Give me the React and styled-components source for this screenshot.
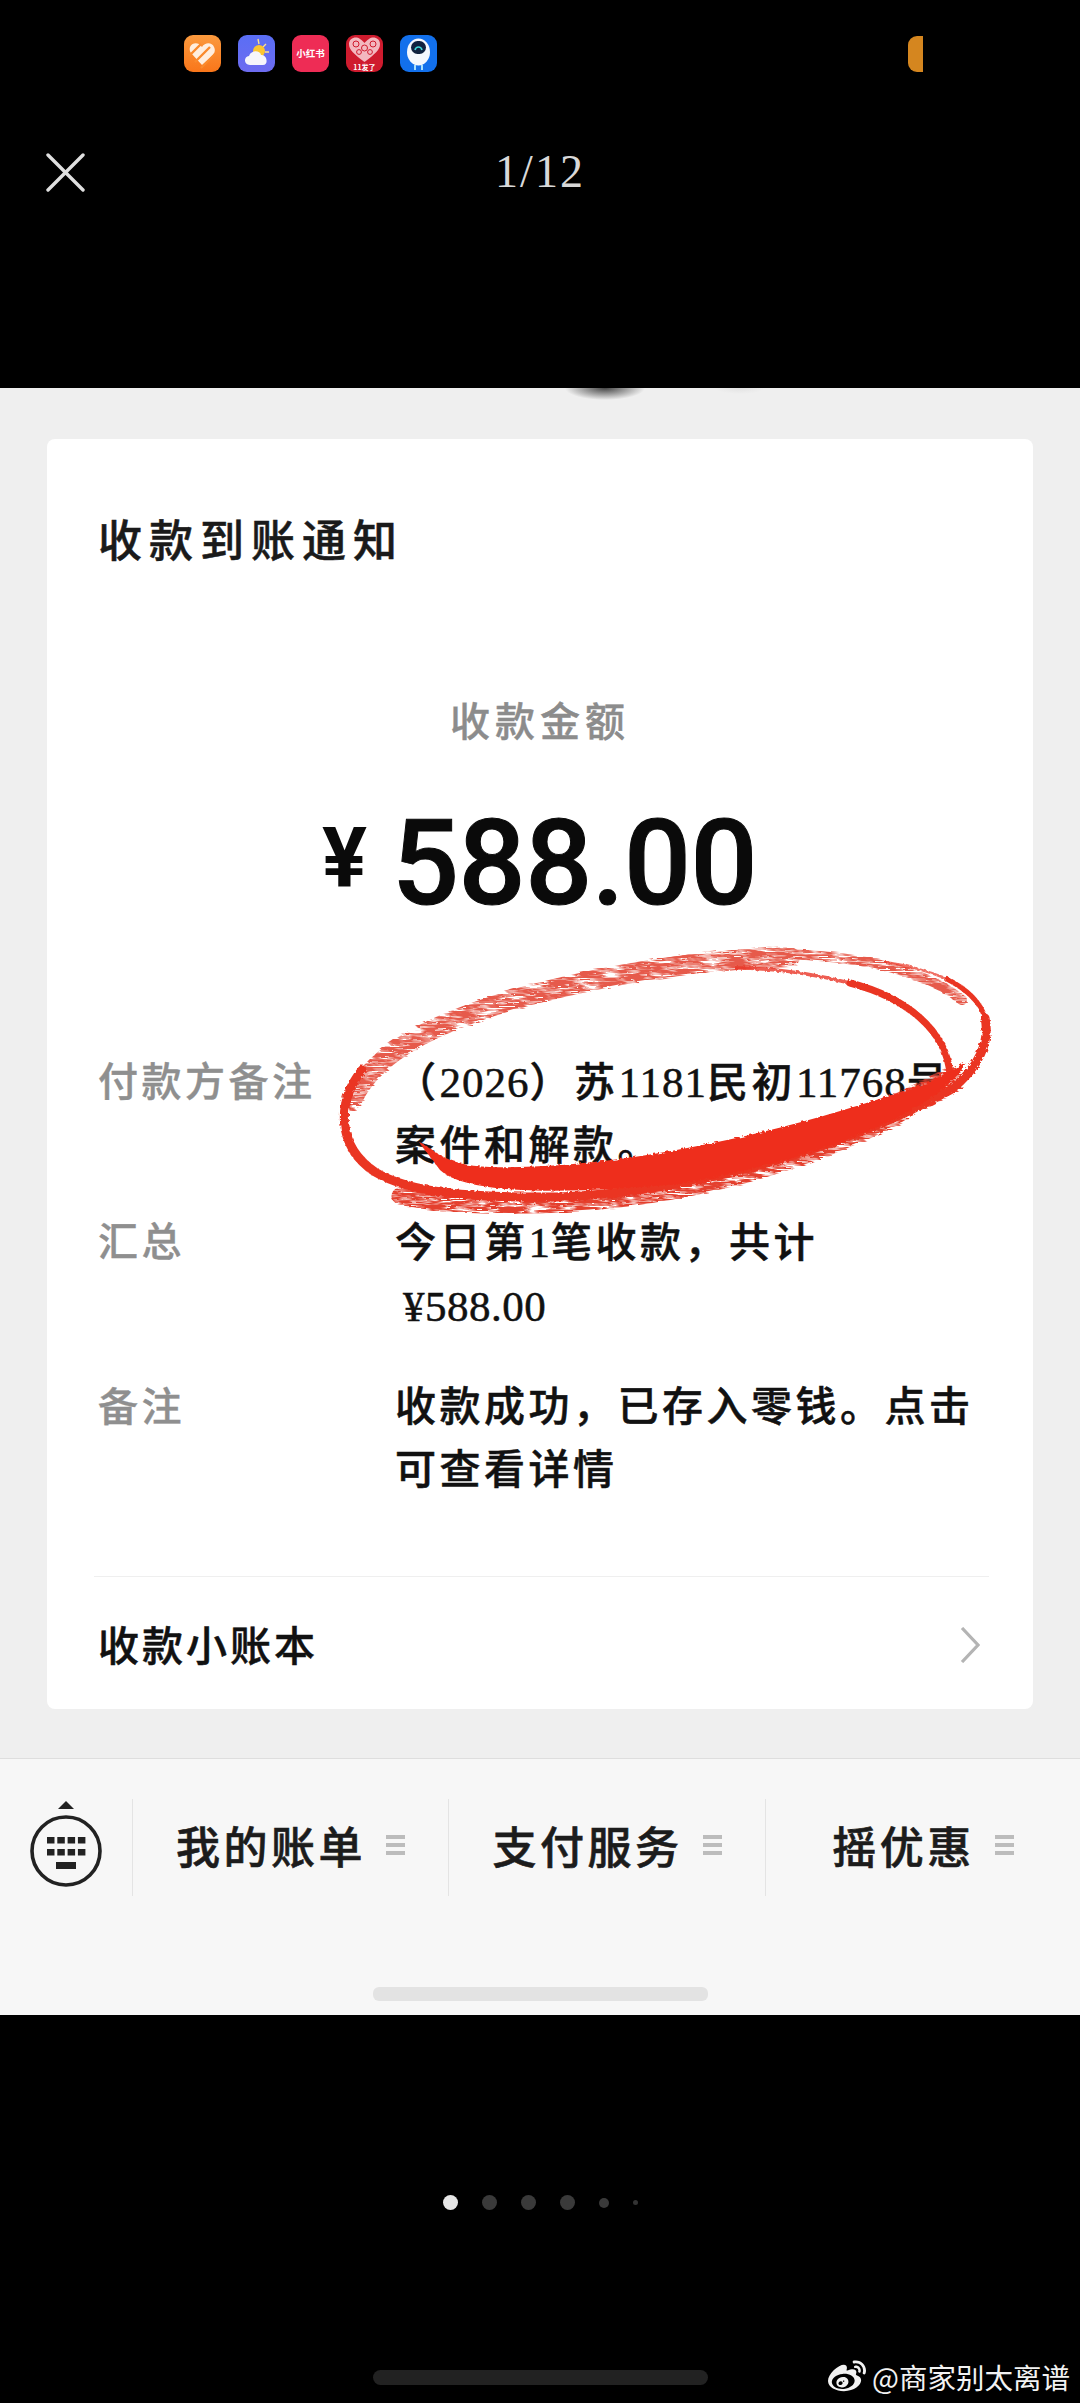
import styled, { createGlobalStyle } from "styled-components";
import { FaWeibo } from "react-icons/fa";

const cjk = `"Liberation Serif", "Noto Sans CJK SC", serif`;

const GlobalStyle = createGlobalStyle`
  html, body {
    margin: 0;
    padding: 0;
    background: #000;
  }
  * {
    box-sizing: border-box;
  }
`;

const Page = styled.div`
  position: relative;
  display: flex;
  flex-direction: column;
  width: 1080px;
  height: 2403px;
  overflow: hidden;
  background: #000;
  font-family: ${cjk};
`;

const Header = styled.header`
  height: 388px;
  padding-top: 35px;
`;

const StatusRow = styled.div`
  display: flex;
  align-items: center;
  gap: 17px;
  padding: 0 157px 0 184px;
`;

const AppIcon = styled.div`
  display: flex;
  flex-direction: column;
  align-items: center;
  justify-content: center;
  width: 37px;
  height: 37px;
  overflow: hidden;
  border-radius: 9px;
  background: ${({ $bg }) => $bg};
  color: #fff;
  font-family: "Noto Sans CJK SC", sans-serif;
  font-weight: 700;

  svg {
    display: block;
  }
`;

const IconText = styled.span`
  font-size: ${({ $size }) => $size}px;
  line-height: 1;
  white-space: nowrap;
`;

const ClippedIcon = styled.div`
  width: 15px;
  height: 36px;
  margin-left: auto;
  border-radius: 9px 0 0 9px;
  background: #d5861f;
`;

const TitleBar = styled.div`
  display: grid;
  grid-template-columns: 1fr auto 1fr;
  align-items: center;
  height: 60px;
  margin-top: 70px;
  padding: 0 46px;
  color: #d8d8d8;
`;

const Counter = styled.div`
  font-family: "Liberation Serif", serif;
  font-size: 46px;
  letter-spacing: 2px;
  line-height: 60px;
`;

const Sheet = styled.main`
  position: relative;
  display: flex;
  flex-direction: column;
  height: 1627px;
  padding-top: 51px;
  background: #efefef;
`;

const Smudge = styled.div`
  position: absolute;
  top: 0;
  left: ${({ $left }) => $left}px;
  width: ${({ $width }) => $width}px;
  height: ${({ $height }) => $height}px;
  background: radial-gradient(ellipse 50% 100% at 50% 0, ${({ $tone }) => $tone} 0, rgba(239, 239, 239, 0) 100%);
`;

const Card = styled.section`
  display: flex;
  flex-direction: column;
  width: 986px;
  height: 1270px;
  margin-left: 47px;
  padding: 74px 41px 0 51px;
  border-radius: 8px;
  background: #fff;
`;

const CardTitle = styled.h1`
  margin: 0;
  color: #1a1a1a;
  font-size: 44px;
  font-weight: 500;
  letter-spacing: 7px;
  line-height: 60px;
  -webkit-text-stroke: 0.5px #1a1a1a;
`;

const AmountLabel = styled.div`
  margin: 120px 10px 0 0;
  color: #8c8c8c;
  font-size: 40px;
  font-weight: 500;
  letter-spacing: 5px;
  line-height: 60px;
  text-align: center;
  -webkit-text-stroke: 0.4px #8c8c8c;
`;

const Amount = styled.div`
  display: flex;
  align-items: center;
  height: 124px;
  margin: 49px 0 0 224px;
  color: #0a0a0a;
  font-family: Roboto, sans-serif;
  font-weight: 500;
`;

const Yen = styled.span`
  width: 70px;
  margin-top: -12px;
  font-size: 84px;
  font-weight: 700;
`;

const Digits = styled.span`
  font-size: 118px;
  letter-spacing: -0.5px;
  -webkit-text-stroke: 1px #0a0a0a;
`;

const Rows = styled.div`
  margin-top: 125px;
`;

const Row = styled.div`
  display: grid;
  grid-template-columns: 297px 1fr;
  margin-top: ${({ $top }) => $top || 0}px;
  font-size: 41px;
  letter-spacing: 3.5px;
  line-height: 63px;
`;

const RowLabel = styled.div`
  color: #8f8f8f;
  font-size: 40px;
  font-weight: 500;
  -webkit-text-stroke: 0.4px #8f8f8f;
`;

const RowValue = styled.div`
  color: #111;
  font-weight: 500;
  -webkit-text-stroke: 0.5px #111;
`;

const Num = styled.span`
  font-size: 43px;
  font-weight: 400;
  letter-spacing: 1px;
`;

const TotalLine = styled(Num)`
  display: block;
  margin-left: 8px;
  letter-spacing: 0.5px;
`;

const Divider = styled.hr`
  width: 895px;
  height: 1px;
  margin: 74px 0 0 -4px;
  border: 0;
  background: #efefef;
`;

const LedgerRow = styled.div`
  display: flex;
  align-items: center;
  justify-content: space-between;
  height: 132px;
  padding-right: 12px;
  color: #111;
  font-size: 41px;
  font-weight: 500;
  letter-spacing: 3px;
  -webkit-text-stroke: 0.5px #111;

  svg {
    margin-top: 3px;
  }
`;

const Nav = styled.nav`
  display: flex;
  flex-direction: column;
  flex: 1;
  margin-top: 49px;
  padding-top: 40px;
  border-top: 1px solid #dedede;
  background: #f7f7f7;
`;

const NavRow = styled.div`
  display: grid;
  grid-template-columns: 132px 316px 317px 1fr;
  height: 97px;
`;

const KeyboardCell = styled.div`
  display: flex;
  align-items: flex-start;
  justify-content: center;
  padding-top: 2px;
`;

const NavItem = styled.div`
  display: flex;
  align-items: center;
  justify-content: center;
  gap: 20px;
  padding-bottom: 6px;
  border-left: 1px solid #e4e4e4;
  color: #1c1c1c;
  font-family: "Noto Sans CJK SC", sans-serif;
  font-size: 44px;
  font-weight: 500;
  letter-spacing: 3.5px;
  -webkit-text-stroke: 0.6px #1c1c1c;
`;

const MenuGlyph = styled.span`
  display: flex;
  flex-direction: column;
  gap: 4px;
  width: 19px;
  -webkit-text-stroke: 0;

  i {
    height: 4px;
    background: #bcbcbc;
  }
`;

const HomeBar = styled.div`
  align-self: center;
  width: 335px;
  height: 14px;
  margin-top: auto;
  margin-bottom: 14px;
  border-radius: 6px;
  background: ${({ $tone }) => $tone};
`;

const Footer = styled.footer`
  display: flex;
  flex-direction: column;
  flex: 1;
  padding-top: 180px;
`;

const Dots = styled.div`
  display: flex;
  align-items: center;
  justify-content: center;
  gap: 24px;
  height: 15px;
`;

const Dot = styled.span`
  width: ${({ $size }) => $size}px;
  height: ${({ $size }) => $size}px;
  border-radius: 50%;
  background: ${({ $tone }) => $tone};
`;

const FooterBar = styled(HomeBar)`
  height: 15px;
  margin: 160px 0 0;
  border-radius: 8px;
`;

const Watermark = styled.div`
  position: absolute;
  right: 10px;
  bottom: 7px;
  display: flex;
  align-items: center;
  gap: 6px;
  color: #f2f2f2;
  font-family: "Noto Sans CJK SC", sans-serif;
  font-size: 28.5px;
  line-height: 36px;
`;

const RedMark = styled.svg`
  position: absolute;
  top: 930px;
  left: 320px;
  width: 690px;
  height: 300px;
  pointer-events: none;
`;

function CloseIcon() {
  return (
    <svg width="39" height="39" viewBox="0 0 39 39" fill="none" stroke="#e0e0e0" strokeWidth="3.4" strokeLinecap="round">
      <path d="M2 2 L37 37 M37 2 L2 37" />
    </svg>
  );
}

function ChevronIcon() {
  return (
    <svg width="20" height="36" viewBox="0 0 20 36" fill="none" stroke="#b4b4b4" strokeWidth="3.2">
      <path d="M2 1 L18 18 L2 35" />
    </svg>
  );
}

function KeyboardIcon() {
  const keys = [];
  for (let r = 0; r < 2; r++) {
    for (let c = 0; c < 4; c++) {
      keys.push(<rect key={`${r}-${c}`} x={17 + c * 10.3} y={36 + r * 12} width="7.5" height="6.5" />);
    }
  }
  return (
    <svg width="72" height="86" viewBox="0 0 72 86">
      <path d="M36 0 L44 8 L28 8 Z" fill="#222" />
      <circle cx="36" cy="50" r="34" fill="none" stroke="#222" strokeWidth="3.6" />
      <g fill="#222">
        {keys}
        <rect x="26" y="61" width="20" height="7" />
      </g>
    </svg>
  );
}

function MenuIcon() {
  return (
    <MenuGlyph>
      <i />
      <i />
      <i />
    </MenuGlyph>
  );
}

function StatusIcons() {
  return (
    <StatusRow>
      <AppIcon $bg="linear-gradient(180deg, #fb9a3e, #f9761a)">
        <svg width="37" height="37" viewBox="0 0 37 37">
          <path d="M18 30 L7 18 C3 12 9 6 15 9 L18 12 C21 7 28 7 30 12 C32 16 30 19 28 21 Z" fill="#ffeede" />
          <path d="M5 21 L17 9 M11 27 L26 12 M17 33 L31 19" stroke="#fa8a2c" strokeWidth="2.4" />
        </svg>
      </AppIcon>
      <AppIcon $bg="linear-gradient(180deg, #5a6ef5, #6d6cf0)">
        <svg width="37" height="37" viewBox="0 0 37 37">
          <path d="M20 4 L21 9 M28 9 L25 12 M31 17 L27 17" stroke="#ffe08a" strokeWidth="1.4" />
          <circle cx="21" cy="16" r="6" fill="#fbc531" />
          <path d="M12 30 C6 30 5 22 11 21 C13 15 22 15 23 20 C29 19 31 30 25 30 Z" fill="#f6f6fb" />
        </svg>
      </AppIcon>
      <AppIcon $bg="#ee2c55">
        <IconText $size={9.5}>小红书</IconText>
      </AppIcon>
      <AppIcon $bg="#cf1b2e">
        <svg width="37" height="27" viewBox="0 0 37 27">
          <path d="M18.5 25 C8 17 3 13 3 7 C3 1 10 -1 14 2 C16 3.5 18 5 18.5 6 C19 5 21 3.5 23 2 C27 -1 34 1 34 7 C34 13 29 17 18.5 25 Z" fill="#f3b8bf" />
          <g fill="none" stroke="#cf1b2e" strokeWidth="1">
            <circle cx="10" cy="7" r="3" />
            <circle cx="18.5" cy="11" r="3" />
            <circle cx="27" cy="7" r="3" />
            <circle cx="13" cy="15" r="2.4" />
            <circle cx="24" cy="15" r="2.4" />
          </g>
        </svg>
        <IconText $size={7}>11发了</IconText>
      </AppIcon>
      <AppIcon $bg="#1270ec">
        <svg width="37" height="37" viewBox="0 0 37 37">
          <ellipse cx="18.5" cy="17" rx="11.5" ry="13.5" fill="#f4f8fd" />
          <rect x="11" y="6" width="15" height="13" rx="6.5" fill="#10223f" />
          <path d="M15 15 C16 11 21 11 22 15" fill="none" stroke="#3fd6d6" strokeWidth="1.6" />
          <path d="M15 30 L15 35 M22 30 L22 35" stroke="#a7e0fb" strokeWidth="2" />
        </svg>
      </AppIcon>
      <ClippedIcon />
    </StatusRow>
  );
}

function HandDrawnCircle() {
  return (
    <RedMark viewBox="320 930 690 300">
      <defs>
        <filter id="rough" x="-5%" y="-10%" width="110%" height="120%">
          <feTurbulence type="fractalNoise" baseFrequency="0.3" numOctaves="2" seed="3" result="noise" />
          <feDisplacementMap in="SourceGraphic" in2="noise" scale="4" />
        </filter>
        <filter id="dry" x="-5%" y="-10%" width="110%" height="120%">
          <feTurbulence type="fractalNoise" baseFrequency="0.04 0.4" numOctaves="3" seed="8" result="noise" />
          <feColorMatrix in="noise" type="matrix" values="0 0 0 0 0 0 0 0 0 0 0 0 0 0 0 0 0 0 5 -1.7" result="grain" />
          <feComposite in="SourceGraphic" in2="grain" operator="in" result="cut" />
          <feDisplacementMap in="cut" in2="noise" scale="5" />
        </filter>
      </defs>
      <g filter="url(#dry)" fill="none" stroke="#e65a4b" strokeLinecap="round">
        <path d="M352 1100 C375 1050 440 1020 530 995 C620 972 700 960 790 957" strokeWidth="20" />
        <path d="M640 968 C700 955 770 950 840 958 C890 964 935 978 962 1000" strokeWidth="10" />
      </g>
      <g filter="url(#dry)" fill="none" stroke="#e4402f" strokeLinecap="round">
        <path d="M400 1196 C440 1206 520 1208 590 1202 C700 1192 800 1165 900 1115" strokeWidth="17" />
        <path d="M700 1170 C790 1150 880 1120 950 1080" strokeWidth="26" />
      </g>
      <g filter="url(#rough)" fill="none" stroke="#ea3524">
        <path d="M362 1070 C338 1100 335 1145 375 1172 C410 1193 470 1198 560 1197 C690 1192 840 1150 950 1090 C980 1068 990 1040 985 1018" strokeWidth="9" strokeLinecap="round" />
        <path d="M985 1018 C980 1000 965 988 945 978" strokeWidth="5" />
        <path d="M945 978 C925 970 905 965 885 962" strokeWidth="2.5" opacity="0.7" />
        <path d="M950 1075 C947 1030 905 997 850 983" strokeWidth="7" strokeLinecap="round" />
        <path d="M850 983 C810 973 770 968 735 968" strokeWidth="3.5" opacity="0.8" />
      </g>
      <path
        filter="url(#rough)"
        d="M419 1142 C432 1146 442 1166 490 1167 C600 1170 760 1142 930 1082 L966 1062 C945 1108 820 1160 680 1184 C590 1192 470 1198 440 1170 Z"
        fill="#ee2f1c"
      />
    </RedMark>
  );
}

export default function App() {
  return (
    <Page>
      <GlobalStyle />
      <Header>
        <StatusIcons />
        <TitleBar>
          <CloseIcon />
          <Counter>1/12</Counter>
        </TitleBar>
      </Header>

      <Sheet>
        <Smudge $left={565} $width={80} $height={12} $tone="#444" />
        <Smudge $left={715} $width={50} $height={6} $tone="#e2e2e2" />
        <Card>
          <CardTitle>收款到账通知</CardTitle>
          <AmountLabel>收款金额</AmountLabel>
          <Amount>
            <Yen>¥</Yen>
            <Digits>588.00</Digits>
          </Amount>
          <Rows>
            <Row>
              <RowLabel>付款方备注</RowLabel>
              <RowValue>
                （<Num>2026</Num>）苏<Num>1181</Num>民初<Num>11768</Num>号
                <br />
                案件和解款。
              </RowValue>
            </Row>
            <Row $top={33}>
              <RowLabel>汇总</RowLabel>
              <RowValue>
                今日第<Num>1</Num>笔收款，共计
                <TotalLine>¥588.00</TotalLine>
              </RowValue>
            </Row>
            <Row $top={38}>
              <RowLabel>备注</RowLabel>
              <RowValue>收款成功，已存入零钱。点击可查看详情</RowValue>
            </Row>
          </Rows>
          <Divider />
          <LedgerRow>
            收款小账本
            <ChevronIcon />
          </LedgerRow>
        </Card>
        <Nav>
          <NavRow>
            <KeyboardCell>
              <KeyboardIcon />
            </KeyboardCell>
            <NavItem>
              我的账单
              <MenuIcon />
            </NavItem>
            <NavItem>
              支付服务
              <MenuIcon />
            </NavItem>
            <NavItem>
              摇优惠
              <MenuIcon />
            </NavItem>
          </NavRow>
          <HomeBar $tone="#e3e3e3" />
        </Nav>
      </Sheet>

      <Footer>
        <Dots>
          <Dot $size={15} $tone="#e6e6e6" />
          <Dot $size={15} $tone="#3a3a3a" />
          <Dot $size={15} $tone="#3a3a3a" />
          <Dot $size={15} $tone="#3a3a3a" />
          <Dot $size={10} $tone="#3a3a3a" />
          <Dot $size={5} $tone="#333" />
        </Dots>
        <FooterBar $tone="#222" />
      </Footer>

      <HandDrawnCircle />
      <Watermark>
        <FaWeibo size={38} />
        @商家别太离谱
      </Watermark>
    </Page>
  );
}
